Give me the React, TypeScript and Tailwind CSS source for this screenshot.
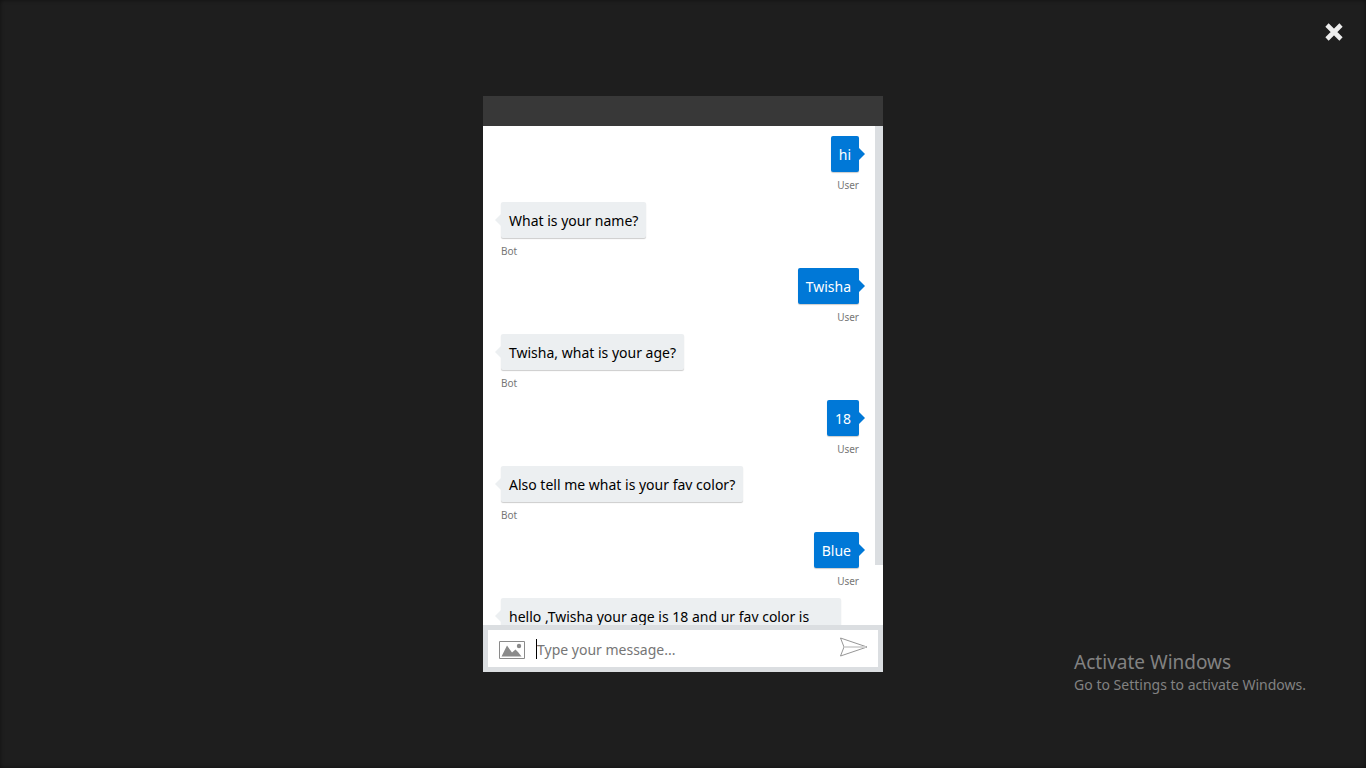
import React from "react";

type Message = { from: "User" | "Bot"; text: string; tall?: boolean };

const messages: Message[] = [
  { from: "User", text: "hi" },
  { from: "Bot", text: "What is your name?" },
  { from: "User", text: "Twisha" },
  { from: "Bot", text: "Twisha, what is your age?" },
  { from: "User", text: "18" },
  { from: "Bot", text: "Also tell me what is your fav color?" },
  { from: "User", text: "Blue" },
  { from: "Bot", text: "hello ,Twisha your age is 18 and ur fav color is", tall: true },
];

function Bubble({ message }: { message: Message }) {
  const user = message.from === "User";
  return (
    <li className={user ? "flex flex-col items-end" : "flex flex-col items-start"}>
      <div
        className={
          user
            ? "relative rounded-xs bg-[#0078d7] px-2 pt-[9px] pb-[7px] text-white shadow-[0_1px_1px_rgba(0,0,0,0.2)]"
            : message.tall
              ? "relative h-14 w-[340px] rounded-xs bg-[#eceff1] px-2 pt-[9px] pb-[7px] text-black shadow-[0_1px_1px_rgba(0,0,0,0.2)]"
              : "relative rounded-xs bg-[#eceff1] px-2 pt-[9px] pb-[7px] text-black shadow-[0_1px_1px_rgba(0,0,0,0.2)]"
        }
      >
        <svg
          aria-hidden="true"
          viewBox="0 0 6 12"
          className={
            user
              ? "absolute top-3 left-full h-3 w-1.5 fill-[#0078d7]"
              : "absolute top-3 right-full h-3 w-1.5 fill-[#eceff1]"
          }
        >
          <path d={user ? "M0 0L6 6L0 12Z" : "M6 0L0 6L6 12Z"} />
        </svg>
        <p className="text-sm leading-5 whitespace-nowrap">{message.text}</p>
      </div>
      {!message.tall && (
        <span className="mt-1.5 text-[10px] leading-[14px] text-[#767676]">{message.from}</span>
      )}
    </li>
  );
}

export default function App() {
  return (
    <div className="relative flex min-h-screen items-center justify-center bg-[#1e1e1e] font-['Segoe_UI','Noto_Sans',sans-serif] shadow-[inset_0_0_4px_rgba(0,0,0,0.5)]">
      <button type="button" aria-label="Close" className="absolute top-5 right-5 flex size-6 items-center justify-center">
        <svg viewBox="0 0 18 18" className="size-[18px]" fill="none" stroke="#ededed" strokeWidth="4.6">
          <path d="M2 2L16 16M16 2L2 16" />
        </svg>
      </button>

      <main className="flex h-[75vh] w-[400px] max-w-full flex-col bg-white">
        <header className="h-[30px] shrink-0 bg-[#383838]" />
        <div className="flex min-h-0 flex-1">
          <ul className="flex min-w-0 flex-1 flex-col gap-2.5 overflow-hidden pt-2.5 pr-4 pl-[18px]">
            {messages.map((message, index) => (
              <Bubble key={index} message={message} />
            ))}
          </ul>
          <div className="h-[88%] w-2 bg-[#dbdee1]" />
        </div>
        <form className="shrink-0 border-5 border-[#dbdee1]" onSubmit={(event) => event.preventDefault()}>
          <div className="flex h-[37px] items-center">
            <button type="button" aria-label="Upload file" className="ml-[11px] flex">
              <svg viewBox="0 0 26 18" className="mt-0.5 h-[18px] w-[26px]">
                <path d="M.5.5h25v17H.5Z" fill="none" stroke="#8a8a8a" />
                <path d="M2.5 15.5L8 4.5L13 11.5L16.5 8.5L19 11L22.5 15.5Z" fill="#8a8a8a" />
                <circle cx="20" cy="5" r="2.2" fill="#8a8a8a" />
              </svg>
            </button>
            <div className="ml-[11px] flex min-w-0 flex-1 items-center">
              <span aria-hidden="true" className="h-5 w-px bg-black" />
              <input
                type="text"
                aria-label="Message"
                placeholder="Type your message..."
                className="min-w-0 flex-1 pt-0.5 text-sm leading-5 text-black outline-none placeholder:text-[#767676]"
              />
            </div>
            <button type="submit" aria-label="Send" className="mr-[10px] flex">
              <svg viewBox="0 0 28 20" className="mb-1 h-5 w-7" fill="none" stroke="#8a8a8a" strokeWidth="0.9">
                <path d="M.5 1L27 10L.5 19L4 10Z" />
                <path d="M4.2 10H26" stroke="#cfcfcf" strokeWidth="1.6" />
              </svg>
            </button>
          </div>
        </form>
      </main>

      <aside className="absolute right-[60px] bottom-[73px] text-[#828282]">
        <p className="text-[19px] leading-[26px]">Activate Windows</p>
        <p className="text-sm leading-5">Go to Settings to activate Windows.</p>
      </aside>
    </div>
  );
}
